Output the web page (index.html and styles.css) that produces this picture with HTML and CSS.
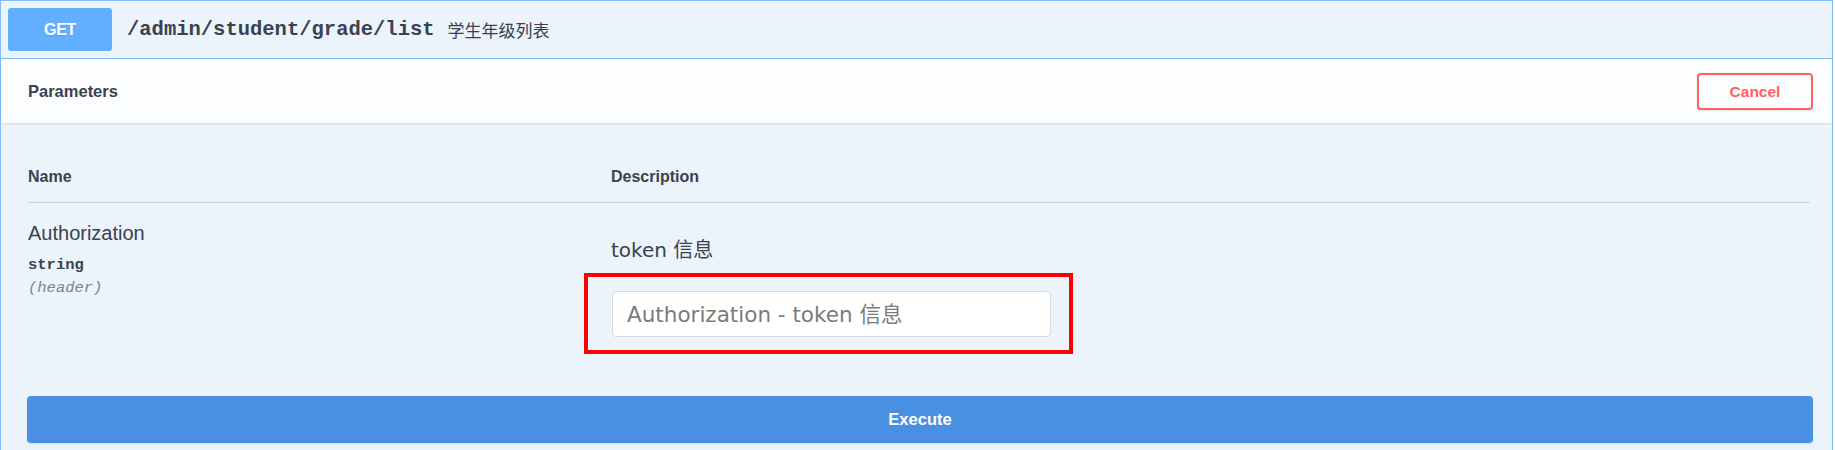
FILE: index.html
```html
<!DOCTYPE html>
<html lang="zh">
<head>
<meta charset="utf-8">
<title>GET /admin/student/grade/list</title>
<link rel="stylesheet" href="styles.css">
</head>
<body>
<div class="opblock">
  <div class="summary">
    <span class="method">GET</span>
    <span class="path">/admin/student/grade/list</span>
    <span class="summary-desc">学生年级列表</span>
  </div>
  <div class="section-header">
    <h4 class="section-title">Parameters</h4>
    <button class="btn-cancel" type="button">Cancel</button>
  </div>
  <div class="params">
    <div class="params-table">
      <div class="th">Name</div>
      <div class="th">Description</div>
      <div class="cell-name">
        <div class="param-name">Authorization</div>
        <div class="param-type">string</div>
        <div class="param-in">(header)</div>
      </div>
      <div class="cell-desc">
        <div class="param-desc">token 信息</div>
        <div class="highlight">
          <input class="param-input" type="text" placeholder="Authorization - token 信息">
        </div>
      </div>
    </div>
  </div>
  <div class="execute-wrap">
    <button class="btn-execute" type="button">Execute</button>
  </div>
</div>
</body>
</html>
```

FILE: styles.css
```css
* { box-sizing: border-box; }

html, body {
  margin: 0;
  padding: 0;
  background: #ffffff;
  color: #3b4151;
  font-family: "Liberation Sans", Arial, sans-serif;
}

.opblock {
  margin: 0 2px 0 0;
  border: 1px solid #7fbcfc;
  border-bottom: none;
  background: #ebf3fb;
  min-height: 460px;
}

.summary {
  display: flex;
  align-items: center;
  padding: 7px;
  border-bottom: 1px solid #7fbcfc;
}

.method {
  display: flex;
  align-items: center;
  justify-content: center;
  width: 104px;
  height: 43px;
  border-radius: 3px;
  background: #61affe;
  color: #ffffff;
  font-weight: bold;
  font-size: 16px;
  letter-spacing: -0.3px;
  text-shadow: 0 1px 0 rgba(0, 0, 0, 0.1);
}

.path {
  margin-left: 15px;
  font-family: "Liberation Mono", "Courier New", monospace;
  font-weight: bold;
  font-size: 20.5px;
  color: #3b4151;
}

.summary-desc {
  margin-left: 13px;
  font-family: "Noto Sans CJK SC", "Noto Sans", sans-serif;
  font-size: 17px;
  color: #3b4151;
}

.section-header {
  display: flex;
  align-items: center;
  justify-content: space-between;
  padding: 14px 19px 13px 27px;
  background: rgba(255, 255, 255, 0.8);
  box-shadow: 0 1px 2px rgba(0, 0, 0, 0.1);
}

.section-title {
  margin: 0;
  font-size: 16.5px;
  font-weight: bold;
  color: #3b4151;
}

.btn-cancel {
  width: 116px;
  height: 37px;
  padding: 0;
  border: 2px solid #ff6060;
  border-radius: 4px;
  background: transparent;
  color: #ff6060;
  font-family: "Liberation Sans", Arial, sans-serif;
  font-weight: bold;
  font-size: 15.5px;
  box-shadow: 0 1px 2px rgba(0, 0, 0, 0.1);
}

.params {
  padding: 0 22px 0 27px;
}

.params-table {
  display: grid;
  grid-template-columns: 583px 1fr;
}

.th {
  padding: 44px 0 15px;
  border-bottom: 1px solid #c8cfd9;
  font-size: 16px;
  line-height: 20px;
  font-weight: bold;
  color: #3b4151;
}

.cell-name {
  padding-top: 18px;
}

.param-name {
  font-size: 20px;
  line-height: 24px;
  color: #3b4151;
}

.param-type {
  margin-top: 10px;
  font-family: "Liberation Mono", "Courier New", monospace;
  font-weight: bold;
  font-size: 15.5px;
  line-height: 20px;
  color: #3b4151;
}

.param-in {
  margin-top: 3px;
  font-family: "Liberation Mono", "Courier New", monospace;
  font-style: italic;
  font-size: 15.5px;
  line-height: 20px;
  color: #7d8490;
}

.cell-desc {
  padding-top: 35px;
}

.param-desc {
  font-family: "DejaVu Sans", "Noto Sans CJK SC", sans-serif;
  font-size: 20px;
  line-height: 24px;
  color: #3b4151;
}

.highlight {
  display: inline-flex;
  margin: 11px 0 0 -27px;
  padding: 14px 18px 13px 24px;
  border: 4px solid #ff0000;
}

.param-input {
  width: 439px;
  height: 46px;
  margin: 0;
  padding: 0 14px;
  border: 1px solid #d9d9d9;
  border-radius: 4px;
  background: #ffffff;
  font-family: "DejaVu Sans", "Noto Sans CJK SC", sans-serif;
  font-size: 21.5px;
  color: #3b4151;
  outline: none;
}

.param-input::placeholder {
  color: #7b7b7b;
  opacity: 1;
}

.execute-wrap {
  padding: 42px 19px 0 26px;
}

.btn-execute {
  display: block;
  width: 100%;
  height: 47px;
  padding: 0;
  border: 2px solid #4990e2;
  border-radius: 4px;
  background: #4990e2;
  color: #ffffff;
  font-family: "Liberation Sans", Arial, sans-serif;
  font-weight: bold;
  font-size: 16.5px;
  box-shadow: 0 1px 2px rgba(0, 0, 0, 0.1);
}
```
